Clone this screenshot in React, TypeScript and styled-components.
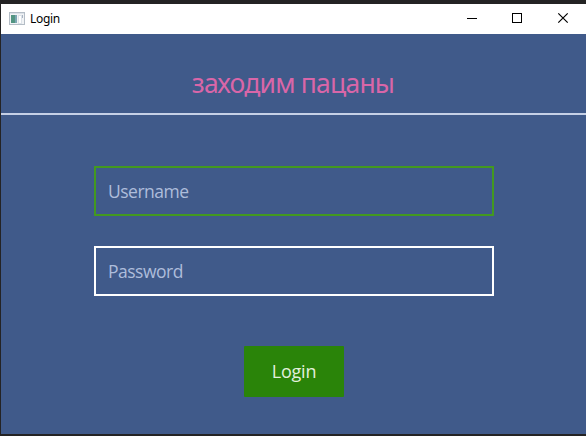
import React, { useState } from "react";
import styled, { createGlobalStyle } from "styled-components";

const GlobalStyle = createGlobalStyle`
  *, *::before, *::after { box-sizing: border-box; }
  html, body { margin: 0; padding: 0; overflow: hidden; background: #242324; }
`;

const Desktop = styled.div`
  height: 100vh;
  padding: 4px 0 2px 1px;
  background: #242324;
  font-family: "Open Sans", "Noto Sans", sans-serif;
`;

const Window = styled.div`
  display: flex;
  flex-direction: column;
  height: 430px;
  background: #405a8a;
`;

const TitleBar = styled.header`
  display: flex;
  align-items: center;
  flex: 0 0 30px;
  padding-left: 8px;
  background: #fff;
`;

const WindowTitle = styled.span`
  flex: 1;
  margin-left: 5px;
  font-family: "Noto Sans", sans-serif;
  font-size: 12px;
  line-height: 30px;
  letter-spacing: -0.3px;
  color: #000;
`;

const WindowButton = styled.button`
  display: grid;
  place-items: center;
  width: 46px;
  height: 30px;
  padding: 0 0 2px;
  border: 0;
  background: none;
`;

const Glyph = styled.svg`
  overflow: visible;
`;

const Controls = styled.div`
  display: flex;
`;

const Heading = styled.h1`
  flex: 0 0 81px;
  margin: 0;
  padding: 31px 1px 0 0;
  border-bottom: 2px solid #c6d0e6;
  font-family: "Noto Sans", sans-serif;
  font-size: 26.5px;
  font-weight: 400;
  line-height: 36px;
  letter-spacing: -0.8px;
  text-align: center;
  color: #d966a8;
`;

const Form = styled.form`
  display: flex;
  flex-direction: column;
  align-items: center;
  padding-top: 51px;
`;

const Field = styled.input<{ $active?: boolean }>`
  width: 400px;
  height: 50px;
  margin: 0 0 30px 1px;
  padding: 0 12px;
  border: 2px solid ${(p) => (p.$active ? "#439920" : "#fff")};
  border-radius: 0;
  outline: 0;
  background: transparent;
  color: #fff;
  font-family: "Open Sans", sans-serif;
  font-size: 17.5px;
  font-weight: 400;
  letter-spacing: -0.5px;
  &::placeholder { color: #aebddb; opacity: 1; }
`;

const SubmitButton = styled.button`
  width: 100px;
  height: 51px;
  margin: 20px 0 0 1px;
  padding: 0 0 1px;
  border: 0;
  border-radius: 1px;
  background: #2a8409;
  color: #e2f0dd;
  font-family: "Open Sans", sans-serif;
  font-size: 18px;
  font-weight: 400;
  letter-spacing: -0.2px;
`;

const AppIcon = () => (
  <svg width="16" height="16" viewBox="0 0 16 16" shapeRendering="crispEdges">
    <rect x="0.5" y="1.5" width="15" height="12" fill="#f1f3f5" stroke="#b4bdc6" />
    <rect x="1" y="2" width="14" height="1" fill="#dbe1e7" />
    <rect x="2" y="4" width="6" height="8" fill="#529582" />
    <rect x="6" y="4" width="2" height="8" fill="#7da7b2" />
    <rect x="9" y="4" width="3" height="8" fill="#fff" stroke="#dce2e8" />
    <rect x="13" y="4" width="1" height="3" fill="#a7b3c1" />
  </svg>
);

const glyphs = {
  Minimize: <path d="M1 5.5H11" />,
  Maximize: <rect x="0.5" y="0.5" width="9" height="9" />,
  Close: <path d="M0.3 0.3L9.7 9.7M9.7 0.3L0.3 9.7" shapeRendering="auto" strokeWidth="1.2" />,
};

export default function App() {
  const [username, setUsername] = useState("");
  const [password, setPassword] = useState("");
  return (
    <Desktop>
      <GlobalStyle />
      <Window>
        <TitleBar>
          <AppIcon />
          <WindowTitle>Login</WindowTitle>
          <Controls>
            {Object.entries(glyphs).map(([name, glyph]) => (
              <WindowButton key={name} aria-label={name}>
                <Glyph width="10" height="10" viewBox="0 0 10 10" fill="none" stroke="#000" shapeRendering="crispEdges">
                  {glyph}
                </Glyph>
              </WindowButton>
            ))}
          </Controls>
        </TitleBar>
        <Heading>заходим пацаны</Heading>
        <Form onSubmit={(e) => e.preventDefault()}>
          <Field $active placeholder="Username" value={username} onChange={(e) => setUsername(e.target.value)} />
          <Field type="password" placeholder="Password" value={password} onChange={(e) => setPassword(e.target.value)} />
          <SubmitButton type="submit">Login</SubmitButton>
        </Form>
      </Window>
    </Desktop>
  );
}
